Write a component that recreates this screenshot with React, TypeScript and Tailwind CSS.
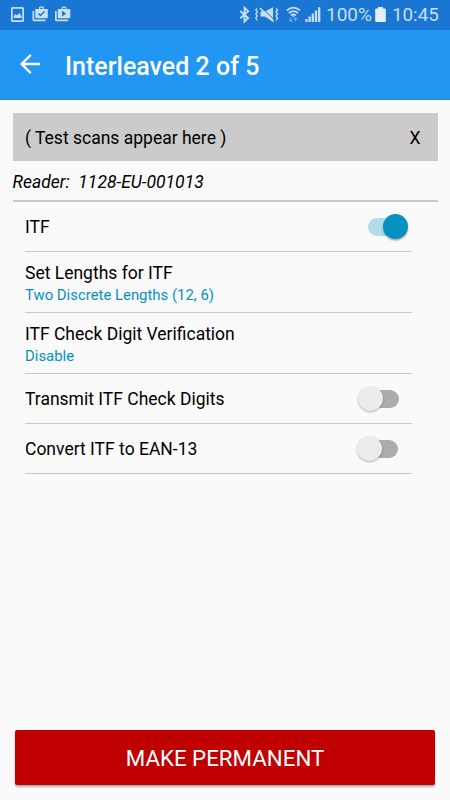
import type { ReactNode } from 'react'
import clsx from 'clsx'

const StatusBar = () => (
  <div className="h-[30px] flex items-center bg-[#1976d2] text-[#c8def5]">
    <svg className="ml-[11px] w-[60px] h-[30px]" viewBox="0 0 60 30" fill="currentColor">
      <path fillRule="evenodd" d="M1.5 7h10A1.5 1.5 0 0 1 13 8.500v12a1.500 1.500 0 0 1-1.500 1.500h-10A1.500 1.500 0 0 1 0 20.500v-12A1.500 1.500 0 0 1 1.500 7zM1.700 8.700v11.600h9.600V8.700z" />
      <path d="M2.700 18v-2l2-2 1.600 1.600 2-2.500 2.200 3V18z" />
      <path d="M21.500 11h1.700v8.500h11.300v1.700H23a1.500 1.500 0 0 1-1.500-1.500z" />
      <path fillRule="evenodd" d="M24.300 9H28V7.500L29 6.500h3l1 1V9h3.800v8.200a1 1 0 0 1-1 1H25.300a1 1 0 0 1-1-1zM29.200 9h2.600V7.700h-2.600z" />
      <path d="m27.500 13.500 2 2 4-4" fill="none" stroke="#1976d2" strokeWidth="1.400" />
      <path d="M44 11h1.700v8.500H57v1.700H45.500a1.500 1.500 0 0 1-1.500-1.500z" />
      <path fillRule="evenodd" d="M46.800 9h3.700V7.500l1-1h3l1 1V9h3.800v8.200a1 1 0 0 1-1 1H47.800a1 1 0 0 1-1-1zM51.700 9h2.600V7.700h-2.600zM51 10.800v5.700l4.200-2.850z" />
    </svg>
    <svg className="ml-[168px] w-[82px] h-[30px]" viewBox="239 0 82 30" fill="none" stroke="currentColor">
      <path d="m240.200 11 8 7-3.700 3.600V7.800l3.700 3.400-8 7" strokeWidth="1.800" />
      <path d="m257 8.500-1.200 1.500 1.500 2-1.500 2 1.500 2-1.500 2 1.500 2.500M276.300 8.500l1.200 1.500-1.500 2 1.500 2-1.500 2 1.500 2-1.500 2.500" strokeWidth="1.300" />
      <path d="M260.500 11.500h4.200l8.300-4.200v14.400l-8.300-5.200h-4.200z" fill="currentColor" stroke="none" />
      <path d="m262 7.500 12.500 12.500" stroke="#1976d2" strokeWidth="1" />
      <path d="m260 8 13.500 13.500" strokeWidth="1.700" />
      <path d="M286.800 10.400q6.600-5.600 13.200 0M288.800 13q4.600-3.800 9.200 0M290.800 15.400q2.600-2 5.200 0" strokeWidth="1.800" />
      <path d="m291.500 15.500 1.900 1.700 1.900-1.700z" fill="currentColor" stroke="none" />
      <path d="M290.900 17.500v4m-1.700-1.700 1.700 1.700 1.500-1.500M295.500 21.500v-3.500m-1.500 1.200 1.500-1.300 1.700 1.500" strokeWidth="1.200" opacity=".5" />
      <path d="M306.400 22v-3M309.600 22v-5.500M312.800 22v-8.500M316 22V10.500M319.200 22V7.300" strokeWidth="2.300" />
    </svg>
    <span className="ml-[5px] w-[46px] text-[19px] leading-[30px] whitespace-nowrap">100%</span>
    <svg className="ml-[3px] w-[11px] h-[30px] text-[#e3effb]" viewBox="0 0 11 30" fill="currentColor">
      <path d="M3 7h5v1.500h1.800a1 1 0 0 1 1 1V21a1 1 0 0 1-1 1H1.200a1 1 0 0 1-1-1V9.500a1 1 0 0 1 1-1H3z" />
    </svg>
    <span className="ml-[6px] text-[18.800px] leading-[30px]">10:45</span>
  </div>
)

const Toggle = ({ on = false }: { on?: boolean }) => (
  <div
    className={clsx(
      'h-[18px] rounded-full flex items-center',
      on ? 'w-[39px] mr-[5.500px] justify-end bg-[#b2dcea]' : 'w-[38px] justify-start bg-[#acacac]'
    )}
  >
    <div
      className={clsx(
        'size-[25px] shrink-0 rounded-full',
        on
          ? '-mr-[1.500px] bg-[#0590c3] shadow-[0_1.500px_2px_rgba(0,0,0,0.35)]'
          : '-ml-[3px] bg-[#ececec] shadow-[0_1px_2px_rgba(0,0,0,0.3)]'
      )}
    />
  </div>
)

interface RowProps {
  title: string
  value?: string
  children?: ReactNode
}

const Row = ({ title, value, children }: RowProps) => (
  <div
    className={clsx(
      'flex items-center justify-between border-b border-[#c8c8c8]',
      value ? 'h-[61px] pt-[3px]' : 'h-[50px]'
    )}
  >
    <div>
      <p className="text-[17.500px] leading-[22px]">{title}</p>
      {value && <p className="text-[14.900px] leading-[22px] text-[#0590c3]">{value}</p>}
    </div>
    {children}
  </div>
)

const App = () => (
  <div className="w-[450px] h-[800px] flex flex-col overflow-hidden bg-[#fafafa] text-black font-[Roboto,sans-serif]">
    <StatusBar />
    <header className="h-[70px] flex items-center bg-[#2196f3] border-b border-[#1e8be3] text-white">
      <svg className="ml-[14.500px] -mt-px size-[30px]" viewBox="0 0 24 24" fill="currentColor">
        <path d="M20 11.050H7.650l5.600-5.600L12 4l-8 8 8 8 1.250-1.350-5.600-5.700H20z" />
      </svg>
      <h1 className="ml-[20.500px] mt-[5px] text-[25px] font-medium">Interleaved 2 of 5</h1>
    </header>
    <main className="flex-1 flex flex-col px-[12.500px] pt-[12.500px]">
      <div className="h-[48.500px] flex items-center justify-between bg-[#cbcbcb] pl-[12.500px] pr-[17px] pt-[2px] text-[17.500px]">
        <span>( Test scans appear here )</span>
        <span>X</span>
      </div>
      <p className="h-[41px] border-b-2 border-[#c8c8c8] text-[17.500px] leading-[42px] italic whitespace-pre">Reader:  1128-EU-001013</p>
      <section className="pl-[12.500px] pr-[25.500px]">
        <Row title="ITF">
          <Toggle on />
        </Row>
        <Row title="Set Lengths for ITF" value="Two Discrete Lengths (12, 6)" />
        <Row title="ITF Check Digit Verification" value="Disable" />
        <Row title="Transmit ITF Check Digits">
          <div className="mr-[13px]"><Toggle /></div>
        </Row>
        <Row title="Convert ITF to EAN-13">
          <div className="mr-[14px]"><Toggle /></div>
        </Row>
      </section>
      <button className="mt-auto mb-[15px] mx-[2.500px] h-[55px] pt-[2px] rounded-[2px] bg-[#c00000] text-white text-[22.300px] shadow-[0_2px_2px_rgba(0,0,0,0.3)]">
        MAKE PERMANENT
      </button>
    </main>
  </div>
)

export default App
